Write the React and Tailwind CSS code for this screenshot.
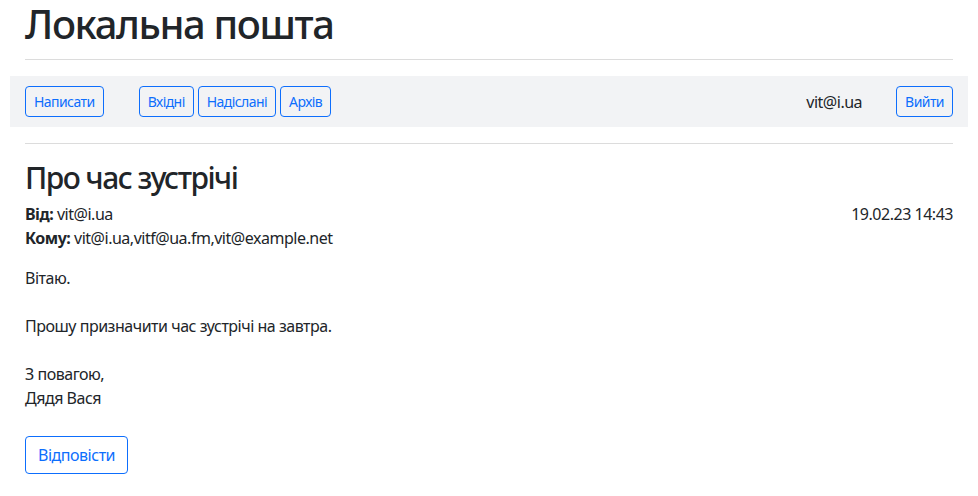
export default function App() {
  const font = { fontFamily: '"Noto Sans", "Open Sans", sans-serif' };
  const smBtn =
    "rounded border border-[#0d6efd] px-2 py-1 text-sm leading-[21px] tracking-[-0.04em] text-[#0d6efd]";
  return (
    <div className="min-h-screen bg-white px-[10px] tracking-[-0.03em] text-[#212529]" style={font}>
      <h1 className="mx-[15px] mb-[11px] text-[40px] font-medium leading-[48px] tracking-[-0.035em]">
        Локальна пошта
      </h1>
      <hr className="mx-[15px] border-t border-[#dcdcdc]" />

      <nav className="mt-4 flex items-center bg-[#f2f3f5] px-[15px] py-[10px]">
        <button className={smBtn}>Написати</button>
        <div className="ml-[35px] flex gap-1">
          <button className={smBtn}>Вхідні</button>
          <button className={smBtn}>Надіслані</button>
          <button className={smBtn}>Архів</button>
        </div>
        <span className="ml-auto text-base">vit@i.ua</span>
        <button className={"ml-[34px] " + smBtn}>Вийти</button>
      </nav>

      <hr className="mx-[15px] mt-4 border-t border-[#dcdcdc]" />

      <div className="mx-[15px]">
        <h2 className="mt-4 mb-[6px] text-[30px] font-medium leading-[36px] tracking-[-0.05em]">
          Про час зустрічі
        </h2>
        <div className="flex justify-between text-base leading-6">
          <div>
            <b className="font-bold">Від:</b> vit@i.ua
          </div>
          <div>19.02.23 14:43</div>
        </div>
        <div className="text-base leading-6">
          <b className="font-bold">Кому:</b> vit@i.ua,vitf@ua.fm,vit@example.net
        </div>

        <div className="mt-4 text-base leading-6">
          <p>Вітаю.</p>
          <br />
          <p>Прошу призначити час зустрічі на завтра.</p>
          <br />
          <p>З повагою,</p>
          <p>Дядя Вася</p>
        </div>

        <button className="mt-[26px] rounded border border-[#0d6efd] px-3 py-[6px] text-base leading-6 text-[#0d6efd]">
          Відповісти
        </button>
      </div>
    </div>
  );
}
